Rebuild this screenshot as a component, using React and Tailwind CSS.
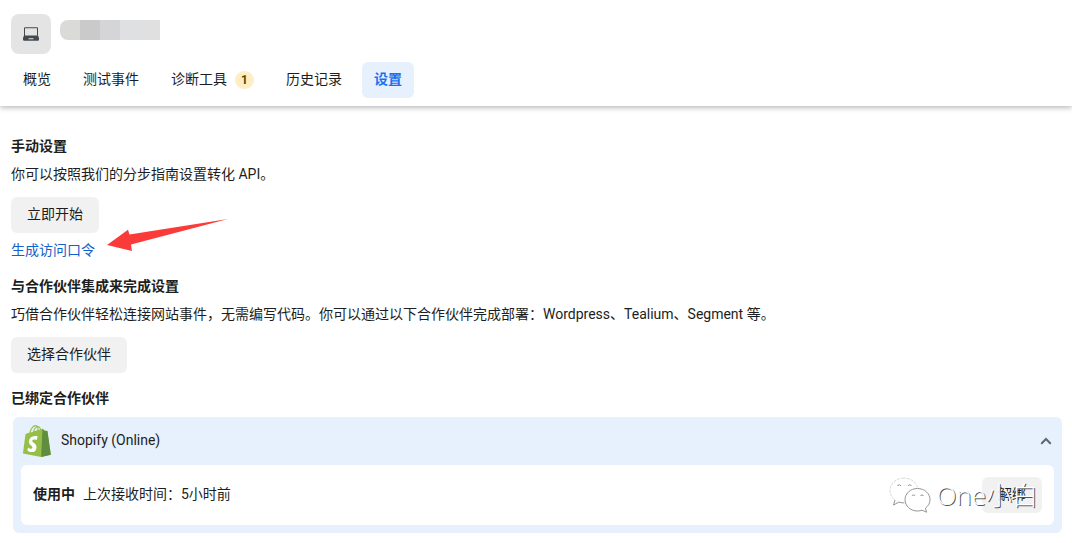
import React, { useState } from "react";
import clsx from "clsx";

const tabs = [
  { id: "overview", label: "概览" },
  { id: "test", label: "测试事件" },
  { id: "diagnostics", label: "诊断工具", badge: 1 },
  { id: "history", label: "历史记录" },
  { id: "settings", label: "设置" },
];

const LaptopIcon = () => (
  <svg viewBox="0 0 16 14" className="w-4 h-3.5" aria-hidden="true">
    <path
      fill="#444950"
      fillRule="evenodd"
      d="M2 .3h12a1 1 0 0 1 1 1v7.200l1 2.500v1.500a1.200 1.200 0 0 1-1.200 1.200H1.200A1.200 1.200 0 0 1 0 12.500V11l1-2.500V1.300a1 1 0 0 1 1-1zm0 1v7.200h12V1.300H2zM5.500 11.200v1h5v-1h-5z"
    />
  </svg>
);

const ShopifyIcon = () => (
  <svg viewBox="0 0 256 292" className="w-7 h-8" aria-hidden="true">
    <path
      fill="#95BF46"
      d="M223.774 57.34c-.201-1.46-1.48-2.268-2.537-2.357-1.055-.088-23.383-1.743-23.383-1.743s-15.507-15.395-17.209-17.099c-1.703-1.703-5.029-1.185-6.32-.805-.19.056-3.388 1.043-8.678 2.68-5.18-14.906-14.322-28.604-30.405-28.604-.444 0-.901.018-1.358.044C129.31 3.407 123.644.779 118.75.779c-37.465 0-55.364 46.835-60.976 70.635-14.558 4.511-24.9 7.718-26.221 8.133-8.126 2.549-8.383 2.805-9.45 10.462C21.3 95.806.038 260.235.038 260.235l165.678 31.042 89.77-19.42S223.973 58.8 223.775 57.34zM156.49 40.848l-14.019 4.339c.005-.988.01-1.96.01-3.023 0-9.264-1.286-16.723-3.349-22.636 8.287 1.04 13.806 10.469 17.358 21.32zm-27.638-19.483c2.304 5.773 3.802 14.058 3.802 25.238 0 .572-.005 1.095-.01 1.624-9.117 2.824-19.024 5.89-28.953 8.966 5.575-21.516 16.025-31.908 25.161-35.828zm-11.131-10.537c1.617 0 3.246.549 4.805 1.622-12.007 5.65-24.877 19.88-30.312 48.297l-22.886 7.088C75.694 46.16 90.81 10.828 117.72 10.828z"
    />
    <path
      fill="#5E8E3E"
      d="M221.237 54.983c-1.055-.088-23.383-1.743-23.383-1.743s-15.507-15.395-17.209-17.099c-.637-.634-1.496-.959-2.394-1.099l-12.527 256.233 89.762-19.418S223.972 58.8 223.774 57.34c-.201-1.46-1.48-2.268-2.537-2.357"
    />
    <path
      fill="#FFF"
      d="M135.242 104.585l-11.069 32.926s-9.698-5.176-21.586-5.176c-17.428 0-18.305 10.937-18.305 13.693 0 15.038 39.2 20.8 39.2 56.024 0 27.713-17.577 45.558-41.277 45.558-28.44 0-42.984-17.7-42.984-17.7l7.615-25.16s14.95 12.835 27.565 12.835c8.243 0 11.596-6.49 11.596-11.232 0-19.616-32.16-20.491-32.16-52.724 0-27.129 19.472-53.382 58.778-53.382 15.145 0 22.627 4.338 22.627 4.338"
    />
  </svg>
);

const WechatIcon = () => (
  <svg viewBox="0 0 42 36" className="w-[42px] h-9" fill="#fff" aria-hidden="true">
    <path
      stroke="#cfcfcf"
      strokeWidth=".8"
      strokeDasharray="3 1"
      d="M15 1C7.300 1 1 6.400 1 13.500c0 4 2 7.300 5 9.600L4.500 28l5.300-2.900c1.700.5 3.400.8 5.200.8 7.700 0 14-5.400 14-12.400S22.700 1 15 1z"
    />
    <path
      fill="none"
      stroke="#888"
      strokeWidth=".8"
      d="M6 23.100 4.500 28l5.300-2.900c1.700.5 3.400.8 5.200.8"
    />
    <path
      stroke="#8a8a8a"
      strokeWidth=".9"
      d="M28.500 11.500C21.600 11.500 16 16.400 16 22.700S21.600 34 28.500 34c1.600 0 3.100-.3 4.500-.8l4.600 2-1.200-4c2.900-2.100 4.600-5.100 4.600-8.500C41 16.400 35.400 11.500 28.500 11.500z"
    />
    <g fill="none" stroke="#888" strokeWidth=".9">
      <path d="M8.500 9a1.800 1.800 0 0 1 3.400 0M19 9a1.800 1.800 0 0 1 3.400 0" />
      <path d="M23 19a1.600 1.600 0 0 1 3 0M31.500 19a1.600 1.600 0 0 1 3 0" />
    </g>
  </svg>
);

const Button = ({ children }) => (
  <button
    type="button"
    className="h-9 px-4 pb-0.5 rounded-md bg-[#f1f1f1] hover:bg-[#e7e7e7]"
  >
    {children}
  </button>
);

const App = () => {
  const [active, setActive] = useState("settings");
  const [open, setOpen] = useState(true);

  return (
    <div className="min-h-screen bg-white text-[#1c1e21] text-sm leading-[22px] font-['Roboto','Noto_Sans_CJK_SC',sans-serif]">
      <header className="px-[11px] pt-3.5 pb-2 shadow-[0_1px_6px_rgba(0,0,0,0.35)]">
        <div className="flex items-start gap-[9px]">
          <div className="flex items-center justify-center w-10 h-10 rounded-lg bg-[#e4e4e4]">
            <LaptopIcon />
          </div>
          {/* account name is masked */}
          <div className="flex mt-1.5 h-5 rounded-l-lg overflow-hidden">
            <span className="w-5 bg-[#dadad9]" />
            <span className="w-5 bg-[#cacaca]" />
            <span className="w-5 bg-[#d5d5d7]" />
            <span className="w-5 bg-[#dfe0e2]" />
            <span className="w-5 bg-[#e0e0e0]" />
          </div>
        </div>
        <nav className="flex gap-2 mt-2">
          {tabs.map((tab) => (
            <button
              key={tab.id}
              type="button"
              onClick={() => setActive(tab.id)}
              className={clsx(
                "flex items-center gap-2 h-9 px-3 rounded-md",
                active === tab.id && "bg-[#e7f0fd] text-[#1871ed] font-bold"
              )}
            >
              <span className="pb-0.5">{tab.label}</span>
              {tab.badge && (
                <span className="flex items-center justify-center w-[19px] h-[18px] rounded-full bg-[#ffeec4] text-[#5f4300] text-xs font-bold">
                  {tab.badge}
                </span>
              )}
            </button>
          ))}
        </nav>
      </header>

      <main className="px-[11px] pt-[29px] pb-2.5">
        <section>
          <h2 className="font-bold">手动设置</h2>
          <p className="mt-1.5 mb-3">你可以按照我们的分步指南设置转化 API。</p>
          <Button>立即开始</Button>
          <div className="relative mt-1.5">
            <a href="#token" className="text-[#1461cc]">
              生成访问口令
            </a>
            <svg
              viewBox="0 0 122 34"
              className="absolute left-24 -top-5 w-[122px] h-[34px]"
              aria-hidden="true"
            >
              <path fill="#fb3b3a" d="M0 26 21 10.700 22.500 15.500 121 0 24 25.500 25 32z" />
            </svg>
          </div>
        </section>

        <section className="mt-3.5">
          <h2 className="font-bold">与合作伙伴集成来完成设置</h2>
          <p className="mt-1.5 mb-3">
            巧借合作伙伴轻松连接网站事件，无需编写代码。你可以通过以下合作伙伴完成部署：Wordpress、Tealium、Segment 等。
          </p>
          <Button>选择合作伙伴</Button>
        </section>

        <section className="mt-3.5">
          <h2 className="font-bold">已绑定合作伙伴</h2>
          <div className="mt-2 ml-0.5 mr-[-1px] px-2 pb-2 rounded-md bg-[#e7f0fd]">
            <button
              type="button"
              aria-expanded={open}
              onClick={() => setOpen(!open)}
              className="flex items-center w-full h-12 pl-0.5 text-left"
            >
              <ShopifyIcon />
              <span className="ml-2.5 flex-1 pb-0.5">Shopify (Online)</span>
              <svg
                viewBox="0 0 16 16"
                className={clsx("w-4 h-4", !open && "rotate-180")}
                aria-hidden="true"
              >
                <path
                  d="M3.800 10.200 8 6l4.200 4.200"
                  fill="none"
                  stroke="#606770"
                  strokeWidth="2"
                  strokeLinecap="round"
                />
              </svg>
            </button>
            {open && (
              <div className="relative flex items-center h-[60px] px-3 rounded-md bg-white">
                <span className="pb-0.5 font-bold">使用中</span>
                <span className="ml-2 flex-1 pb-0.5">上次接收时间：5小时前</span>
                <Button>解绑</Button>
                <div className="absolute right-4 top-3 flex items-center gap-1.5 pointer-events-none">
                  <WechatIcon />
                  <span className="text-[26px] leading-9 font-light text-white whitespace-nowrap font-['Open_Sans','Noto_Sans_CJK_SC',sans-serif] [text-shadow:1px_1px_0_#555]">
                    One小白
                  </span>
                </div>
              </div>
            )}
          </div>
        </section>
      </main>
    </div>
  );
};

export default App;
